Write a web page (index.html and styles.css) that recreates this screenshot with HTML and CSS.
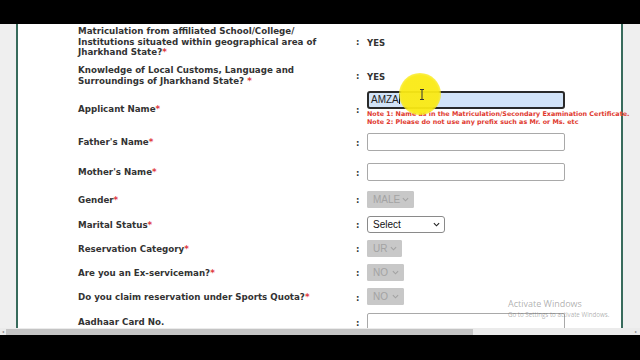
FILE: index.html
```html
<!DOCTYPE html>
<html>
<head>
    <meta charset="UTF-8">
    <title>Application Form</title>
    <link rel="stylesheet" href="styles.css">
</head>
<body>
<div class="screen">
    <div class="topbar"></div>
    <div class="viewport">
        <div class="panel">
            <div class="row h34">
                <div class="label">Matriculation from affiliated School/College/<br>Institutions situated within geographical area of<br>Jharkhand State?<span class="req">*</span></div>
                <div class="colon">:</div>
                <div class="field"><span class="val">YES</span></div>
            </div>
            <div class="row h33">
                <div class="label">Knowledge of Local Customs, Language and<br>Surroundings of Jharkhand State? <span class="req">*</span></div>
                <div class="colon">:</div>
                <div class="field"><span class="val">YES</span></div>
            </div>
            <div class="row h35">
                <div class="label">Applicant Name<span class="req">*</span></div>
                <div class="colon">:</div>
                <div class="field">
                    <div class="txt focus">AMZA<span class="caret"></span></div>
                    <div class="note">Note 1: Name as in the Matriculation/Secondary Examination Certificate.<br>Note 2: Please do not use any prefix such as Mr. or Ms. etc</div>
                </div>
            </div>
            <div class="row h31">
                <div class="label">Father's Name<span class="req">*</span></div>
                <div class="colon">:</div>
                <div class="field"><div class="txt"></div></div>
            </div>
            <div class="row h29">
                <div class="label">Mother's Name<span class="req">*</span></div>
                <div class="colon">:</div>
                <div class="field"><div class="txt"></div></div>
            </div>
            <div class="row h26">
                <div class="label">Gender<span class="req">*</span></div>
                <div class="colon">:</div>
                <div class="field"><div class="sel off w47">MALE<svg class="chev" viewBox="0 0 8 5"><path d="M1 1l3 3 3-3"/></svg></div></div>
            </div>
            <div class="row h24">
                <div class="label">Marital Status<span class="req">*</span></div>
                <div class="colon">:</div>
                <div class="field"><div class="sel w78">Select<svg class="chev" viewBox="0 0 8 5"><path d="M1 1l3 3 3-3"/></svg></div></div>
            </div>
            <div class="row h24">
                <div class="label">Reservation Category<span class="req">*</span></div>
                <div class="colon">:</div>
                <div class="field"><div class="sel off w35">UR<svg class="chev" viewBox="0 0 8 5"><path d="M1 1l3 3 3-3"/></svg></div></div>
            </div>
            <div class="row h24">
                <div class="label">Are you an Ex-serviceman?<span class="req">*</span></div>
                <div class="colon">:</div>
                <div class="field"><div class="sel off w37">NO<svg class="chev" viewBox="0 0 8 5"><path d="M1 1l3 3 3-3"/></svg></div></div>
            </div>
            <div class="row h25">
                <div class="label">Do you claim reservation under Sports Quota?<span class="req">*</span></div>
                <div class="colon">:</div>
                <div class="field"><div class="sel off w37">NO<svg class="chev" viewBox="0 0 8 5"><path d="M1 1l3 3 3-3"/></svg></div></div>
            </div>
            <div class="row h25">
                <div class="label">Aadhaar Card No.</div>
                <div class="colon">:</div>
                <div class="field"><div class="txt"></div></div>
            </div>
        </div>

        <!-- mouse highlight from the screen recording -->
        <div class="spot"></div>
        <svg class="ibeam" viewBox="0 0 6 11"><path d="M1 0.5h4M3 0.5v10M1 10.5h4"/></svg>

        <div class="watermark">
            <div class="wm1">Activate Windows</div>
            <div class="wm2">Go to Settings to activate Windows.</div>
        </div>
    </div>
    <div class="hscroll">
        <span class="arr">&#9666;</span>
        <div class="thumb"></div>
        <span class="arr right">&#9656;</span>
    </div>
    <div class="bottombar"></div>
</div>
</body>
</html>
```

FILE: styles.css
```css
html, body {
    margin: 0;
    padding: 0;
    background: #000;
}

.screen {
    width: 640px;
    height: 360px;
    display: flex;
    flex-direction: column;
    overflow: hidden;
}

.topbar { height: 24px; background: #000; flex: none; }
.bottombar { height: 25px; background: #000; flex: none; }

.viewport {
    position: relative;
    height: 304px;
    flex: none;
    overflow: hidden;
    background: #efefef;
}

.panel {
    margin-left: 16px;
    width: 607px;
    min-height: 320px;
    padding-left: 60px;
    box-sizing: border-box;
    background: #fff;
    border-left: 2px solid #386b5c;
    border-right: 2px solid #386b5c;
}

.row {
    display: flex;
    align-items: center;
}
.h35 { height: 35px; }
.h34 { height: 34px; }
.h33 { height: 33px; }
.h31 { height: 31px; }
.h29 { height: 29px; }
.h26 { height: 26px; }
.h25 { height: 25px; }
.h24 { height: 24px; }

.label {
    width: 278px;
    flex: none;
    padding-top: 2px;
    font-family: "DejaVu Sans", Verdana, sans-serif;
    font-weight: bold;
    font-size: 8.7px;
    line-height: 10.5px;
    color: #333;
}
.req { color: #e0393e; }

.colon {
    width: 11px;
    flex: none;
    font-family: "DejaVu Sans", Verdana, sans-serif;
    font-weight: bold;
    font-size: 8.5px;
    padding-top: 2px;
    color: #333;
}

.field {
    flex: none;
    width: 220px;
}

.val {
    font-family: "DejaVu Sans", Verdana, sans-serif;
    font-weight: bold;
    font-size: 8.5px;
    color: #333;
}

.txt {
    width: 198px;
    height: 18px;
    box-sizing: border-box;
    border: 1px solid #a9a9a9;
    border-radius: 2px;
    background: #fff;
    font-family: "Liberation Sans", Arial, sans-serif;
    font-size: 10px;
    line-height: 16px;
    padding-left: 3px;
    color: #222;
}
.txt.focus {
    border: 2px solid #2a2a2a;
    border-radius: 3px;
    background: #d2e3f8;
    line-height: 14px;
    padding-left: 2px;
}
.caret {
    display: inline-block;
    width: 1px;
    height: 10px;
    background: #111;
    vertical-align: -1px;
}

.note {
    margin-top: 1px;
    white-space: nowrap;
    font-family: "DejaVu Sans", Verdana, sans-serif;
    font-weight: bold;
    font-size: 6.4px;
    line-height: 8px;
    color: #e0392e;
}

.sel {
    display: flex;
    align-items: center;
    justify-content: space-between;
    height: 17px;
    box-sizing: border-box;
    padding: 0 4px 0 5px;
    border: 1px solid #8a8a8a;
    border-radius: 3px;
    background: #fff;
    font-family: "Liberation Sans", Arial, sans-serif;
    font-size: 10px;
    color: #111;
}
.sel.off {
    border-color: #c8c8c8;
    border-radius: 1px;
    background: #c8c8c8;
    color: #a3a3a3;
}
.w35 { width: 35px; }
.w37 { width: 37px; }
.w47 { width: 47px; }
.w78 { width: 78px; }

.chev {
    width: 7px;
    height: 5px;
    fill: none;
    stroke: #222;
    stroke-width: 1.3;
}
.sel.off .chev { stroke: #a3a3a3; }

.spot {
    position: absolute;
    left: 399px;
    top: 49px;
    width: 42px;
    height: 42px;
    border-radius: 50%;
    background: radial-gradient(circle, rgba(250, 234, 20, 0.95) 62%, rgba(250, 234, 20, 0) 100%);
}

.ibeam {
    position: absolute;
    left: 419px;
    top: 65px;
    width: 6px;
    height: 11px;
    fill: none;
    stroke: #333;
    stroke-width: 1;
}

.watermark {
    position: absolute;
    left: 508px;
    top: 274px;
    font-family: "Open Sans", "Noto Sans", sans-serif;
    color: rgba(110, 110, 110, 0.55);
    white-space: nowrap;
}
.wm1 { font-size: 9px; line-height: 12px; }
.wm2 { font-size: 6.2px; line-height: 9px; }

.hscroll {
    height: 7px;
    flex: none;
    display: flex;
    align-items: center;
    background: #ebebeb;
    font-family: "DejaVu Sans", sans-serif;
    font-size: 4px;
    color: #777;
}
.arr { width: 6px; text-align: center; }
.arr.right { margin-left: auto; width: 8px; }
.thumb {
    width: 467px;
    height: 6px;
    background: #c4c4c4;
}
```
